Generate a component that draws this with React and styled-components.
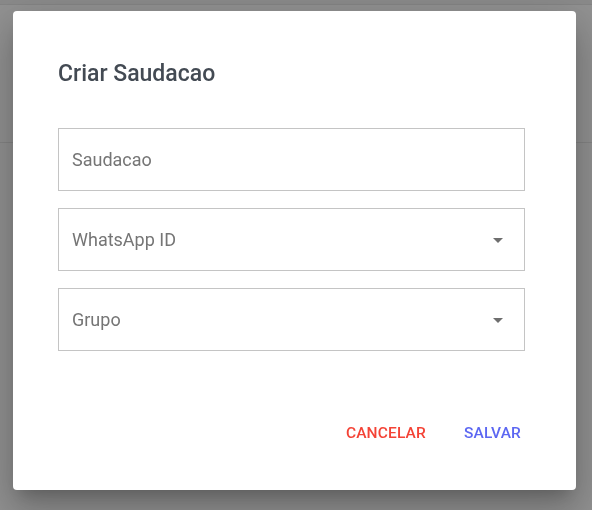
import React from "react";
import styled, { createGlobalStyle } from "styled-components";

const GlobalStyle = createGlobalStyle`
  html, body {
    margin: 0;
    padding: 0;
    height: 100%;
    background: #929292;
    font-family: Roboto, "Liberation Sans", Arial, sans-serif;
  }
`;

// page under the backdrop
const Page = styled.div`
  height: 510px;
  background: #929292;
`;

const PageTop = styled.div`
  height: 4px;
  background: #8b8b8b;
  border-bottom: 1px solid #858585;
`;

const PageHeader = styled.div`
  height: 137px;
  border-bottom: 1px solid #858585;
`;

const Overlay = styled.div`
  position: fixed;
  inset: 0;
  padding: 11px 0 0 13px;
`;

const Dialog = styled.div`
  box-sizing: border-box;
  width: 563px;
  height: 479px;
  background: #fff;
  border-radius: 4px;
  box-shadow: 0 11px 15px -7px rgba(0, 0, 0, 0.2),
    0 24px 38px 3px rgba(0, 0, 0, 0.14), 0 9px 46px 8px rgba(0, 0, 0, 0.12);
  padding: 45px 47px 39px 45px;
  display: flex;
  flex-direction: column;
`;

const Title = styled.h2`
  margin: 2px 0 38px 0;
  font-size: 23px;
  line-height: 32px;
  font-weight: 500;
  color: #434a53;
`;

const Fields = styled.div`
  display: flex;
  flex-direction: column;
  gap: 17px;
  width: 467px;
`;

const Field = styled.div`
  box-sizing: border-box;
  height: 63px;
  border: 1px solid #c4c4c4;
  display: flex;
  align-items: center;
  justify-content: space-between;
  padding: 0 14px 0 13px;
`;

const Label = styled.span`
  font-size: 18px;
  color: #757575;
`;

const Arrow = styled.svg`
  width: 24px;
  height: 24px;
  fill: #6e6e6e;
`;

const Actions = styled.div`
  margin-top: auto;
  display: flex;
  justify-content: flex-end;
  gap: 22px;
`;

const Button = styled.button`
  border: 0;
  background: transparent;
  padding: 6px 8px;
  height: 36px;
  font-family: Roboto, "Liberation Sans", Arial, sans-serif;
  font-size: 15.5px;
  font-weight: 500;
  text-transform: uppercase;
  letter-spacing: 0.01em;
  color: ${(p) => p.color};
  cursor: pointer;
`;

const fields = [
  { label: "Saudacao", select: false },
  { label: "WhatsApp ID", select: true },
  { label: "Grupo", select: true },
];

const App = () => {
  return (
    <>
      <GlobalStyle />
      <Page>
        <PageTop />
        <PageHeader />
      </Page>
      <Overlay>
        <Dialog>
          <Title>Criar Saudacao</Title>
          <Fields>
            {fields.map((f) => (
              <Field key={f.label}>
                <Label>{f.label}</Label>
                {f.select && (
                  <Arrow viewBox="0 0 24 24">
                    <path d="M7 10l5 5 5-5z" />
                  </Arrow>
                )}
              </Field>
            ))}
          </Fields>
          <Actions>
            <Button color="#f44336">Cancelar</Button>
            <Button color="#5c67f2">Salvar</Button>
          </Actions>
        </Dialog>
      </Overlay>
    </>
  );
};

export default App;
